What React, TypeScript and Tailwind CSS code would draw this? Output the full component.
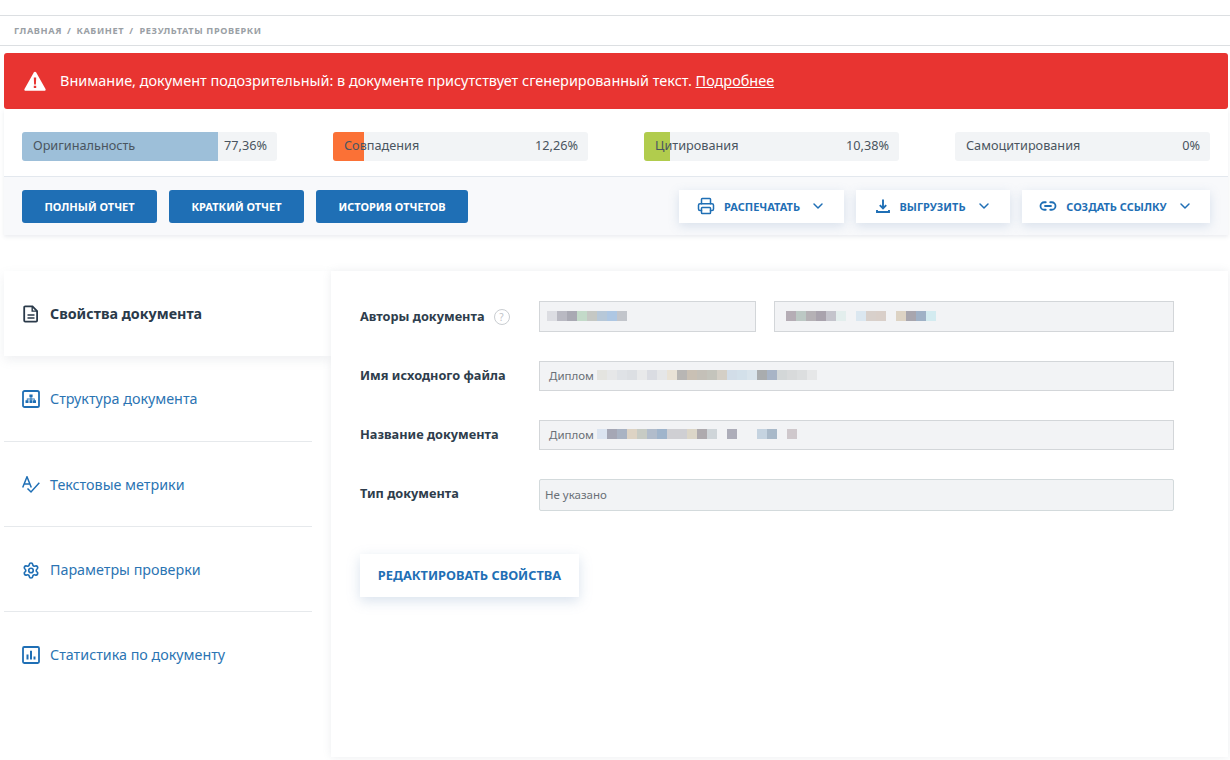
import React from "react";
import { ChevronDown, Printer, Link2, Settings } from "lucide-react";

const F = "font-['Noto_Sans','Open_Sans',sans-serif]";

function Stat({ label, value, fill, width }: { label: string; value: string; fill: string; width: number }) {
  return (
    <div className="relative flex h-[29px] w-[255px] items-center justify-between overflow-hidden rounded-[3px] bg-[#f2f4f6] pb-[2px] pl-[11px] pr-[10px] text-[12.7px] text-[#4a5560]">
      {width > 0 && <div className={`absolute inset-y-0 left-0 ${fill}`} style={{ width }} />}
      <span className="relative">{label}</span>
      <span className="relative">{value}</span>
    </div>
  );
}

function Primary({ children, w }: { children: React.ReactNode; w: string }) {
  return (
    <button className={`flex h-[33px] ${w} items-center justify-center rounded-[3px] bg-[#1f6fb5] pt-[2px] text-[11px] font-bold text-white`}>
      {children}
    </button>
  );
}

function Action({ icon, label, w }: { icon: React.ReactNode; label: string; w: string }) {
  return (
    <button className={`flex h-[33px] ${w} items-center justify-center gap-[9px] bg-white text-[11px] font-bold text-[#1f6fb5] shadow-[0_3px_10px_rgba(120,150,190,0.25)]`}>
      {icon}
      <span className="pt-[2px]">{label}</span>
      <ChevronDown size={16} strokeWidth={2.2} className="ml-[1px]" />
    </button>
  );
}

function Mosaic({ cells }: { cells: string[] }) {
  return (
    <div className="mb-[2px] flex h-[10px]">
      {cells.map((c, i) => (
        <div key={i} className="h-full w-[10px]" style={{ background: c }} />
      ))}
    </div>
  );
}

function Field({ children, className = "" }: { children: React.ReactNode; className?: string }) {
  return (
    <div className={`flex items-center overflow-hidden border border-[#d3d6d9] bg-[#f2f3f5] text-[11.5px] text-[#6a7077] ${className}`}>
      {children}
    </div>
  );
}

function NavItem({ icon, label, h = "h-[85px]", extra = "", border = true }: { icon: React.ReactNode; label: string; h?: string; extra?: string; border?: boolean }) {
  return (
    <div className={`flex ${h} ${extra} items-center gap-[10px] pl-[18px] text-[14.3px] text-[#2b74b3] ${border ? "border-b border-[#e6e9ec]" : ""}`}>
      <span className="flex w-[18px] justify-center">{icon}</span>
      {label}
    </div>
  );
}

const IconDoc = () => (
  <svg width="18" height="18" viewBox="0 0 18 18" fill="none" stroke="#2a3a4a" strokeWidth="1.8">
    <path d="M2.2 2.400a1 1 0 0 1 1-1h7.300l4.600 4.600v9.600a1 1 0 0 1-1 1H3.200a1 1 0 0 1-1-1z" />
    <path d="M10.200 1.500v4.600h4.800M5.500 10h7M5.500 13h7" strokeWidth="1.400" />
  </svg>
);
const IconStruct = () => (
  <svg width="18" height="18" viewBox="0 0 18 18" fill="none">
    <rect x="1" y="1" width="16" height="16" rx="1.600" stroke="#1f6fb5" strokeWidth="1.800" />
    <path d="M7.400 4.500h3.200v2.800H9.500v1.300h3.200v1.600h1.300V13h-3v-2.800h1v-.8H9.500v.8h1V13h-3v-2.800h1v-.8H5.500v.8h1V13h-3v-2.800h1.300V8.600h3.700V7.300H7.400z" fill="#1f6fb5" />
  </svg>
);
const IconMetrics = () => (
  <svg width="18" height="18" viewBox="0 0 18 18" fill="none" stroke="#1f6fb5" strokeWidth="1.500">
    <path d="M.7 11.500 5 .8l4.300 10.700M2.100 8h5.800" />
    <path d="M5.500 12.500 9 16l8.300-9.300" />
  </svg>
);
const IconStats = () => (
  <svg width="18" height="18" viewBox="0 0 18 18" fill="none" stroke="#1f6fb5">
    <rect x="1" y="1" width="16" height="16" rx="1.200" strokeWidth="1.800" />
    <path d="M5.500 8.500v5M9 4.800v8.700M12.500 10.500v3" strokeWidth="2" />
  </svg>
);
const IconDownload = () => (
  <svg width="16" height="16" viewBox="0 0 16 16" fill="none" stroke="#1f6fb5" strokeWidth="1.900">
    <path d="M8 1.500v8.500M4.800 7.200 8 10.400l3.200-3.200M2 12v2h12v-2" />
  </svg>
);
const IconWarn = () => (
  <svg width="22" height="20" viewBox="0 0 22 20">
    <path d="M11 .8c.5 0 .9.2 1.200.7l9.300 16.400c.5.900-.1 1.900-1.100 1.900H1.600C.6 19.800 0 18.800.5 17.900L9.800 1.500c.3-.5.7-.7 1.200-.7z" fill="#fff" />
    <path d="M9.800 6.500h2.400l-.3 7h-1.800zM9.800 14.800h2.400v2.300H9.800z" fill="#e83431" />
  </svg>
);

export default function App() {
  return (
    <div className={`${F} min-h-[760px] w-[1230px] overflow-hidden bg-white`}>
      <div className="h-[16px] border-b border-[#dcdfe2]" />
      <div className="flex h-[30px] items-center gap-[5px] border-b border-[#dcdfe2] pl-[14px] text-[9.2px] font-bold tracking-[0.6px] text-[#9aa0a5]">
        <span>ГЛАВНАЯ</span><span>/</span><span>КАБИНЕТ</span><span>/</span><span className="ml-[1px]">РЕЗУЛЬТАТЫ ПРОВЕРКИ</span>
      </div>

      <div className="ml-[4px] mr-[2px] mt-[7px] flex h-[56px] items-center gap-[14px] rounded-[3px] bg-[#e83431] pl-[20px] text-[14.45px] text-white">
        <IconWarn />
        <span>Внимание, документ подозрительный: в документе присутствует сгенерированный текст. <span className="underline">Подробнее</span></span>
      </div>

      <div className="ml-[4px] mr-[2px] shadow-[0_2px_4px_rgba(90,110,130,0.12)]">
        <div className="flex h-[68px] items-start justify-between border-b border-[#e3e8ee] pl-[18px] pr-[18px] pt-[23px]">
          <Stat label="Оригинальность" value="77,36%" fill="bg-[#9dbfd9]" width={196} />
          <Stat label="Совпадения" value="12,26%" fill="bg-[#fb7136]" width={31} />
          <Stat label="Цитирования" value="10,38%" fill="bg-[#b1cc4d]" width={26} />
          <Stat label="Самоцитирования" value="0%" fill="" width={0} />
        </div>
        <div className="flex h-[58px] items-center bg-[#f8f9fb] pl-[18px] pr-[18px]">
          <div className="flex gap-[12px]">
            <Primary w="w-[135px]">ПОЛНЫЙ ОТЧЕТ</Primary>
            <Primary w="w-[135px]">КРАТКИЙ ОТЧЕТ</Primary>
            <Primary w="w-[152px]">ИСТОРИЯ ОТЧЕТОВ</Primary>
          </div>
          <div className="ml-auto flex gap-[12px]">
            <Action w="w-[165px]" label="РАСПЕЧАТАТЬ" icon={<Printer size={18} strokeWidth={2} />} />
            <Action w="w-[154px]" label="ВЫГРУЗИТЬ" icon={<IconDownload />} />
            <Action w="w-[188px]" label="СОЗДАТЬ ССЫЛКУ" icon={<Link2 size={18} strokeWidth={2.400} />} />
          </div>
        </div>
      </div>

      <div className="ml-[4px] mr-[2px] mt-[36px] flex items-start">
        <div className="w-[327px]">
          <div className="flex h-[85px] items-center gap-[10px] bg-white pl-[18px] text-[14.3px] font-bold text-[#2a3a4a] shadow-[0_4px_10px_rgba(120,135,150,0.12)]">
            <span className="flex w-[18px] justify-center"><IconDoc /></span>
            Свойства документа
          </div>
          <div className="w-[308px]">
            <NavItem icon={<IconStruct />} label="Структура документа" h="h-[86px]" />
            <NavItem icon={<IconMetrics />} label="Текстовые метрики" extra="pt-[2px]" />
            <NavItem icon={<Settings size={19} strokeWidth={2.200} className="text-[#1f6fb5]" />} label="Параметры проверки" extra="pt-[2px]" />
            <NavItem icon={<IconStats />} label="Статистика по документу" border={false} />
          </div>
        </div>

        <div className="h-[486px] flex-1 bg-white pl-[29px] pt-[30px] shadow-[0_0_8px_rgba(120,135,150,0.14)]">
          <div className="flex h-[31px] items-center">
            <div className="flex w-[179px] items-center gap-[9px] pt-[1px] text-[12.75px] font-bold text-[#2e3d4c]">
              Авторы документа
              <span className="flex h-[16px] w-[16px] items-center justify-center rounded-full border border-[#c9cdd1] text-[10px] font-normal text-[#bfc3c7]">?</span>
            </div>
            <Field className="h-[31px] w-[217px] pl-[7px]">
              <Mosaic cells={["#dcdde2", "#b9b9c2", "#a9a9b3", "#c3dac9", "#c5c8c4", "#b7c8d8", "#aec7e3", "#c2c5cb"]} />
            </Field>
            <Field className="ml-[18px] h-[31px] w-[400px] pl-[11px]">
              <Mosaic cells={["#b5adb5", "#bcc8c4", "#b5b1b5", "#a9a3ad", "#c4c4cc", "#e3eeed", "#f2f3f5", "#dbe7f0", "#d8d0cb", "#d9cfc9", "#f2f3f5", "#ddd3c4", "#a8a6ae", "#9fb1c6", "#d3ebf0"]} />
            </Field>
          </div>

          <div className="mt-[29px] flex h-[31px] items-center">
            <div className="w-[179px] pb-[2px] text-[12.75px] font-bold text-[#2e3d4c]">Имя исходного файла</div>
            <Field className="h-[30px] w-[635px] self-start pl-[9px]">
              <span className="mr-[3px]">Диплом</span>
              <Mosaic cells={["#e4e4e0", "#e6e7e8", "#dfe2e6", "#dcdfe3", "#e8e9ea", "#dadce2", "#e5e6e8", "#e9e2d6", "#b8b6b4", "#c9c0b4", "#c4c0b8", "#c4c4bc", "#d4cfc6", "#d2dde8", "#d3e0ea", "#d9e4ec", "#a9acae", "#a8b4c6", "#d3d7d8", "#d8dadb", "#dcdedf", "#e6e7e8"]} />
            </Field>
          </div>

          <div className="mt-[28px] flex h-[31px] items-center">
            <div className="w-[179px] pb-[2px] text-[12.75px] font-bold text-[#2e3d4c]">Название документа</div>
            <Field className="h-[30px] w-[635px] self-start pl-[9px]">
              <span className="mr-[3px]">Диплом</span>
              <Mosaic cells={["#dbe4f0", "#a5a7b5", "#a9b3c3", "#ddd3c4", "#c7cbc4", "#b1bccb", "#9fb4cb", "#cfcfd3", "#cfcfd3", "#dcd6c8", "#aeaaae", "#cfd5d9", "#f2f3f5", "#adadb9", "#f2f3f5", "#f2f3f5", "#c5d3e0", "#a9b9c9", "#f2f3f5", "#cfc8cc"]} />
            </Field>
          </div>

          <div className="mt-[27px] flex h-[33px] items-center">
            <div className="w-[179px] pb-[2px] text-[12.75px] font-bold text-[#2e3d4c]">Тип документа</div>
            <Field className="h-[32px] w-[635px] rounded-[2px] border-[#d3dadc] bg-[#f1f3f3] pl-[5px] text-[10.5px]">Не указано</Field>
          </div>

          <button className="mt-[43px] h-[43px] w-[219px] bg-white pt-[1px] text-[12.8px] font-bold text-[#1f6fb5] shadow-[0_4px_12px_rgba(120,150,190,0.28)]">
            РЕДАКТИРОВАТЬ СВОЙСТВА
          </button>
        </div>
      </div>
    </div>
  );
}
